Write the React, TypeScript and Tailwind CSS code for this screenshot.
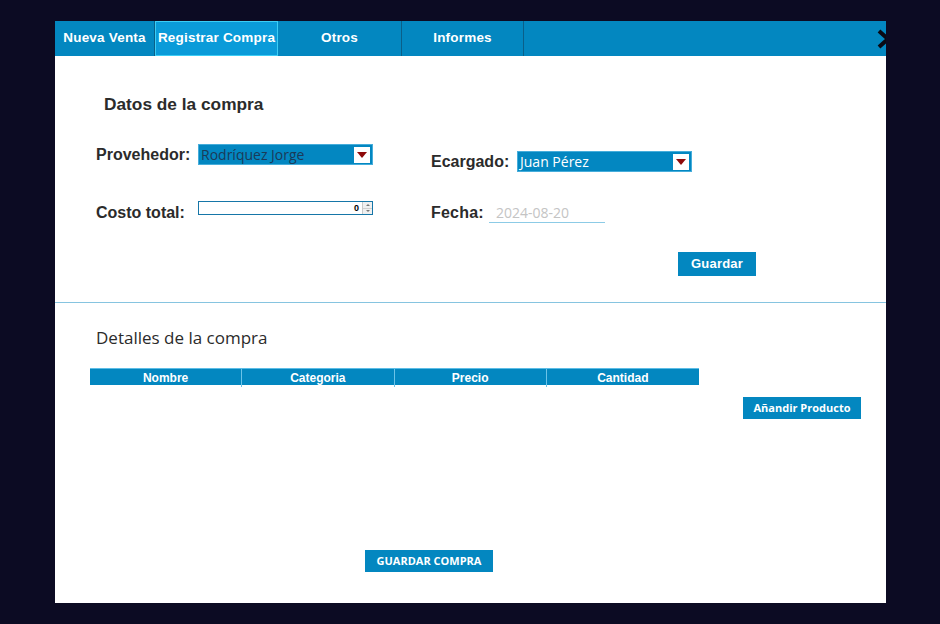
import React from "react";

const arial = { fontFamily: '"Liberation Sans", Arial, sans-serif' };
const segoe = { fontFamily: '"Open Sans", "Noto Sans", sans-serif' };

function Tab({ label, width, active }: { label: string; width: string; active?: boolean }) {
  return (
    <div
      className={`${width} h-full flex items-center justify-center text-white font-bold text-[13.5px] tracking-[0.2px] ${
        active ? "bg-[#0a9bd9] border border-[#3ccdf5]" : "border-r border-[#0a5f88]"
      }`}
      style={arial}
    >
      {label}
    </div>
  );
}

function DropSelect({ value, textClass }: { value: string; textClass: string }) {
  return (
    <div className="w-[175px] h-[21px] bg-[#0387c1] border border-[#46addb] flex items-center pl-[2px] pr-[2px]">
      <span className={`flex-1 text-[14px] leading-none ${textClass}`} style={segoe}>
        {value}
      </span>
      <div className="w-[16px] h-[16px] bg-white flex items-center justify-center">
        <svg width="10" height="6" viewBox="0 0 10 6">
          <polygon points="0,0 10,0 5,6" fill="#8e0a0a" />
        </svg>
      </div>
    </div>
  );
}

export default function App() {
  return (
    <div className="w-[940px] h-[624px] bg-[#0c0b23] pt-[21px] pl-[55px]">
      <div className="w-[831px] h-[582px] bg-white flex flex-col overflow-hidden">
        {/* top nav */}
        <div className="h-[35px] bg-[#0387c0] flex items-stretch shrink-0 overflow-hidden">
          <Tab label="Nueva Venta" width="w-[100px]" />
          <Tab label="Registrar Compra" width="w-[123px]" active />
          <Tab label="Otros" width="w-[124px]" />
          <Tab label="Informes" width="w-[122px]" />
          <div className="ml-auto mr-[-7px] flex items-center">
            <svg width="18" height="20" viewBox="0 0 18 20">
              <polyline points="4,2 13,10 4,18" fill="none" stroke="#0a0a14" strokeWidth="4" />
            </svg>
          </div>
        </div>

        {/* datos de la compra */}
        <div className="h-[247px] border-b border-[#86c4e0] shrink-0">
          <div className="pt-[38px] pl-[49px] text-[17.3px] font-bold text-[#2b2b2b] leading-[20px]" style={arial}>
            Datos de la compra
          </div>
          <div className="flex pl-[41px]">
            {/* left column */}
            <div className="w-[335px]">
              <div className="mt-[30px] flex items-center h-[21px]">
                <div className="w-[102px] text-[16px] font-bold text-[#2b2b2b]" style={arial}>
                  Provehedor:
                </div>
                <DropSelect value="Rodríquez Jorge" textClass="text-[#1b3a58]" />
              </div>
              <div className="mt-[36px] flex items-start">
                <div className="w-[102px] mt-[2px] text-[16px] leading-[20px] font-bold text-[#2b2b2b]" style={arial}>
                  Costo total:
                </div>
                <div className="w-[175px] h-[14px] border border-[#1676a8] flex">
                  <div className="flex-1 text-right pr-[3px] text-[9px] font-bold leading-[12px] text-black" style={arial}>
                    0
                  </div>
                  <div className="w-[10px] h-full flex flex-col border-l border-[#c9c9c9] bg-[#f0f0f0]">
                    <div className="flex-1 flex items-center justify-center border-b border-[#cfcfcf]">
                      <svg width="4" height="2" viewBox="0 0 4 2">
                        <polygon points="0,2 4,2 2,0" fill="#777" />
                      </svg>
                    </div>
                    <div className="flex-1 flex items-center justify-center">
                      <svg width="4" height="2" viewBox="0 0 4 2">
                        <polygon points="0,0 4,0 2,2" fill="#777" />
                      </svg>
                    </div>
                  </div>
                </div>
              </div>
            </div>

            {/* right column */}
            <div>
              <div className="mt-[37px] flex items-center h-[21px]">
                <div className="w-[86px] text-[16px] font-bold text-[#2b2b2b]" style={arial}>
                  Ecargado:
                </div>
                <DropSelect value="Juan Pérez" textClass="text-white" />
              </div>
              <div className="mt-[31px] flex items-start">
                <div className="w-[58px] text-[16px] leading-[20px] font-bold text-[#2b2b2b] tracking-[0.2px]" style={arial}>
                  Fecha:
                </div>
                <div
                  className="w-[116px] h-[20px] border-b border-[#8ccbe6] pl-[7px] text-[14px] leading-[20px] text-[#c4c4c4]"
                  style={segoe}
                >
                  2024-08-20
                </div>
              </div>
              <div className="mt-[27px] ml-[247px]">
                <button
                  className="w-[78px] h-[24px] bg-[#0387c0] text-white font-bold text-[13px] tracking-[0.2px]"
                  style={arial}
                >
                  Guardar
                </button>
              </div>
            </div>
          </div>
        </div>

        {/* detalles de la compra */}
        <div className="flex-1">
          <div className="pt-[23px] pl-[41px] text-[17px] leading-[24px] text-[#2b2b2b]" style={segoe}>
            Detalles de la compra
          </div>
          <div className="flex items-start pl-[35px] mt-[18px]">
            <div
              className="w-[609px] h-[17px] bg-[#0387c0] border-t border-[#5cbde6] grid grid-cols-4 text-white font-bold text-[12px]"
              style={arial}
            >
              <div className="flex items-center justify-center border-r border-[#6cc3e8]">Nombre</div>
              <div className="flex items-center justify-center border-r border-[#6cc3e8]">Categoria</div>
              <div className="flex items-center justify-center border-r border-[#6cc3e8]">Precio</div>
              <div className="flex items-center justify-center">Cantidad</div>
            </div>
            <button
              className="ml-[44px] mt-[29px] w-[118px] h-[22px] bg-[#0387c0] text-white font-bold text-[11px]"
              style={segoe}
            >
              Añandir Producto
            </button>
          </div>
          <div className="mt-[128px] ml-[310px]">
            <button
              className="w-[128px] h-[22px] bg-[#0387c0] text-white font-bold text-[11px]"
              style={segoe}
            >
              GUARDAR COMPRA
            </button>
          </div>
        </div>
      </div>
    </div>
  );
}
